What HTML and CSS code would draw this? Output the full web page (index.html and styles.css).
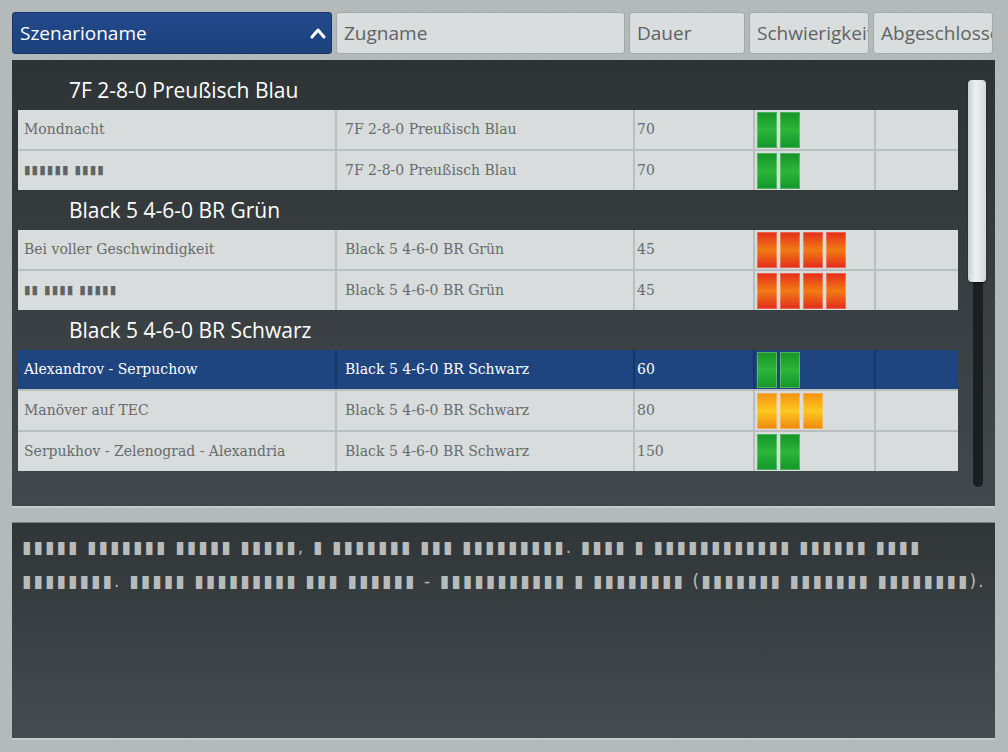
FILE: index.html
```html
<html>
  <head>
    <meta charset="utf-8">
    <link rel="stylesheet" href="styles.css">
  </head>
  <body>
    <div class="screen">
      <div class="tabs">
        <div class="tab tab-name active">
          <span>Szenarioname</span>
          <svg class="chevron" width="16" height="12" viewBox="0 0 16 12">
            <polyline points="2,10 8,3 14,10" fill="none" stroke="#fff" stroke-width="3" stroke-linecap="round" stroke-linejoin="round"/>
          </svg>
        </div>
        <div class="tab tab-train">Zugname</div>
        <div class="tab tab-dur">Dauer</div>
        <div class="tab tab-diff">Schwierigkeit</div>
        <div class="tab tab-done">Abgeschlossen</div>
      </div>

      <div class="list-panel">
        <div class="list">
          <div class="group-title">7F 2-8-0 Preußisch Blau</div>
          <div class="rows">
            <div class="row">
              <div class="cell">Mondnacht</div>
              <div class="cell train">7F 2-8-0 Preußisch Blau</div>
              <div class="cell dur">70</div>
              <div class="cell diff"><span class="pip green"></span><span class="pip green"></span></div>
              <div class="cell"></div>
            </div>
            <div class="row">
              <div class="cell tofu">▮▮▮▮▮▮ ▮▮▮▮</div>
              <div class="cell train">7F 2-8-0 Preußisch Blau</div>
              <div class="cell dur">70</div>
              <div class="cell diff"><span class="pip green"></span><span class="pip green"></span></div>
              <div class="cell"></div>
            </div>
          </div>

          <div class="group-title">Black 5 4-6-0 BR Grün</div>
          <div class="rows">
            <div class="row">
              <div class="cell">Bei voller Geschwindigkeit</div>
              <div class="cell train">Black 5 4-6-0 BR Grün</div>
              <div class="cell dur">45</div>
              <div class="cell diff"><span class="pip red"></span><span class="pip red"></span><span class="pip red"></span><span class="pip red"></span></div>
              <div class="cell"></div>
            </div>
            <div class="row">
              <div class="cell tofu">▮▮ ▮▮▮▮ ▮▮▮▮▮</div>
              <div class="cell train">Black 5 4-6-0 BR Grün</div>
              <div class="cell dur">45</div>
              <div class="cell diff"><span class="pip red"></span><span class="pip red"></span><span class="pip red"></span><span class="pip red"></span></div>
              <div class="cell"></div>
            </div>
          </div>

          <div class="group-title">Black 5 4-6-0 BR Schwarz</div>
          <div class="rows">
            <div class="row selected">
              <div class="cell">Alexandrov - Serpuchow</div>
              <div class="cell train">Black 5 4-6-0 BR Schwarz</div>
              <div class="cell dur">60</div>
              <div class="cell diff"><span class="pip green"></span><span class="pip green"></span></div>
              <div class="cell"></div>
            </div>
            <div class="row">
              <div class="cell">Manöver auf TEC</div>
              <div class="cell train">Black 5 4-6-0 BR Schwarz</div>
              <div class="cell dur">80</div>
              <div class="cell diff"><span class="pip yellow"></span><span class="pip yellow"></span><span class="pip yellow"></span></div>
              <div class="cell"></div>
            </div>
            <div class="row">
              <div class="cell">Serpukhov - Zelenograd - Alexandria</div>
              <div class="cell train">Black 5 4-6-0 BR Schwarz</div>
              <div class="cell dur">150</div>
              <div class="cell diff"><span class="pip green"></span><span class="pip green"></span></div>
              <div class="cell"></div>
            </div>
          </div>
        </div>

        <div class="scrollbar">
          <div class="track"></div>
          <div class="thumb"></div>
        </div>
      </div>

      <div class="desc-panel">
        <p>▮▮▮▮▮ ▮▮▮▮▮▮▮ ▮▮▮▮▮ ▮▮▮▮▮, ▮ ▮▮▮▮▮▮▮ ▮▮▮ ▮▮▮▮▮▮▮▮▮. ▮▮▮▮ ▮ ▮▮▮▮▮▮▮▮▮▮▮▮ ▮▮▮▮▮▮ ▮▮▮▮<br>▮▮▮▮▮▮▮▮. ▮▮▮▮▮ ▮▮▮▮▮▮▮▮▮ ▮▮▮ ▮▮▮▮▮▮ - ▮▮▮▮▮▮▮▮▮▮▮ ▮ ▮▮▮▮▮▮▮▮ (▮▮▮▮▮▮▮ ▮▮▮▮▮▮▮ ▮▮▮▮▮▮▮▮).</p>
      </div>
    </div>
  </body>
</html>
```

FILE: styles.css
```css
body {
  margin: 0;
  background-color: #b3b8b8;
  background-image: repeating-linear-gradient(45deg, rgba(255,255,255,0.05) 0 1px, transparent 1px 3px);
}
.screen {
  width: 1008px;
  height: 752px;
  padding: 12px 13px 0 12px;
  box-sizing: border-box;
}

/* column header tabs */
.tabs {
  display: flex;
  gap: 4px;
  height: 42px;
  margin-bottom: 6px;
}
.tab {
  box-sizing: border-box;
  height: 42px;
  display: flex;
  align-items: center;
  padding-left: 7px;
  overflow: hidden;
  white-space: nowrap;
  font-family: "Open Sans", sans-serif;
  font-size: 19px;
  color: #5e6464;
  background-color: #d9dddd;
  border: 1px solid #a3a9a9;
  border-radius: 3px;
}
.tab.active {
  color: #fff;
  background: linear-gradient(#23498a, #1c417c);
  border-color: #163465;
  justify-content: space-between;
  padding-right: 5px;
}
.tab-name { width: 320px; }
.tab-train { width: 289px; }
.tab-dur { width: 116px; }
.tab-diff { width: 120px; }
.tab-done { width: 120px; }

/* scenario list */
.list-panel {
  display: flex;
  height: 448px;
  box-sizing: border-box;
  padding: 10px 0 0 6px;
  background: linear-gradient(#2e3335, #42494c);
  border-bottom: 2px solid #c6caca;
}
.list {
  width: 940px;
}
.group-title {
  height: 40px;
  line-height: 40px;
  padding-left: 51px;
  font-family: "Open Sans", sans-serif;
  font-size: 21px;
  color: #fff;
}
.rows {
  display: flex;
  flex-direction: column;
  gap: 2px;
  background-color: #b9bebe;
}
.row {
  display: grid;
  grid-template-columns: 317px 296px 118px 119px 1fr;
  gap: 2px;
  height: 39px;
  background-color: #b9bebe;
}
.cell {
  display: flex;
  align-items: center;
  padding-left: 6px;
  padding-bottom: 1px;
  box-sizing: border-box;
  background-color: #d8dcdc;
  font-family: "DejaVu Serif", serif;
  font-size: 14px;
  color: #666b6b;
  white-space: nowrap;
  overflow: hidden;
}
.cell.train { padding-left: 8px; }
.cell.dur { padding-left: 2px; }
.cell.diff { padding-left: 2px; padding-bottom: 0; gap: 3px; }
.cell.tofu {
  font-family: "DejaVu Sans", sans-serif;
  font-size: 12px;
  letter-spacing: 1px;
  color: #5f6464;
}
.row.selected { background-color: #163766; }
.row.selected .cell {
  background-color: #1e4580;
  color: #fff;
}

/* difficulty pips */
.pip {
  width: 20px;
  height: 36px;
  box-sizing: border-box;
  border: 1px solid rgba(255,255,255,0.25);
}
.pip.green { background: linear-gradient(#169628, #2db53a 50%, #13982b); }
.pip.red { background: linear-gradient(#e6301a, #f17b14 50%, #e52f1b); }
.pip.yellow { background: linear-gradient(#f39410, #fdc81f 50%, #ef8a10); }

/* scrollbar */
.scrollbar {
  position: relative;
  width: 18px;
  margin-left: 10px;
}
.track {
  position: absolute;
  left: 5px;
  top: 10px;
  width: 10px;
  height: 407px;
  border-radius: 5px;
  background: #1b1f21;
}
.thumb {
  position: absolute;
  left: 0;
  top: 10px;
  width: 18px;
  height: 202px;
  border-radius: 4px;
  background: linear-gradient(to right, #c9cecf, #eef1f1 40%, #d5d9da);
  box-shadow: 0 1px 2px rgba(0,0,0,0.5);
}

/* description */
.desc-panel {
  margin-top: 14px;
  height: 218px;
  box-sizing: border-box;
  padding: 7px 10px;
  background: linear-gradient(#303537, #454c4f);
  border-top: 1px solid #7e8586;
  border-bottom: 2px solid #c6caca;
}
.desc-panel p {
  margin: 0;
  font-family: "DejaVu Sans", sans-serif;
  font-size: 17px;
  line-height: 34px;
  letter-spacing: 2.15px;
  white-space: nowrap;
  color: #b8bbbb;
}
```
